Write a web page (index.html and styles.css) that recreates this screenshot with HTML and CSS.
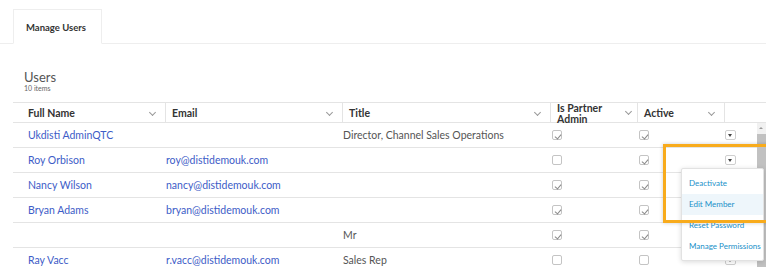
FILE: index.html
```html
<!DOCTYPE html>
<html lang="en">
<head>
  <meta charset="UTF-8">
  <title>Manage Users</title>
  <link rel="stylesheet" href="styles.css">
</head>
<body>
  <div class="tabs">
    <div class="tab">Manage Users</div>
  </div>

  <div class="list-head">
    <div class="list-title">Users</div>
    <div class="list-count">10 items</div>
  </div>

  <div class="grid">
    <div class="grid-header">
      <div class="hcell c-name"><span>Full Name</span><i class="chev"></i></div>
      <div class="hcell c-email"><span>Email</span><i class="chev"></i></div>
      <div class="hcell c-title"><span>Title</span><i class="chev"></i></div>
      <div class="hcell c-partner"><span>Is Partner Admin</span><i class="chev"></i></div>
      <div class="hcell c-active"><span>Active</span><i class="chev"></i></div>
      <div class="hcell c-action"></div>
    </div>

    <div class="grid-body">
      <div class="rows">
        <div class="row">
          <div class="cell c-name link">Ukdisti AdminQTC</div>
          <div class="cell c-email link"></div>
          <div class="cell c-title">Director, Channel Sales Operations</div>
          <div class="cell c-partner"><span class="box checked"></span></div>
          <div class="cell c-active"><span class="box checked"></span></div>
          <div class="cell c-action"><span class="drop"></span></div>
        </div>
        <div class="row">
          <div class="cell c-name link">Roy Orbison</div>
          <div class="cell c-email link">roy@distidemouk.com</div>
          <div class="cell c-title"></div>
          <div class="cell c-partner"><span class="box"></span></div>
          <div class="cell c-active"><span class="box checked"></span></div>
          <div class="cell c-action"><span class="drop"></span></div>
        </div>
        <div class="row">
          <div class="cell c-name link">Nancy Wilson</div>
          <div class="cell c-email link">nancy@distidemouk.com</div>
          <div class="cell c-title"></div>
          <div class="cell c-partner"><span class="box checked"></span></div>
          <div class="cell c-active"><span class="box checked"></span></div>
          <div class="cell c-action"></div>
        </div>
        <div class="row">
          <div class="cell c-name link">Bryan Adams</div>
          <div class="cell c-email link">bryan@distidemouk.com</div>
          <div class="cell c-title"></div>
          <div class="cell c-partner"><span class="box checked"></span></div>
          <div class="cell c-active"><span class="box checked"></span></div>
          <div class="cell c-action"></div>
        </div>
        <div class="row">
          <div class="cell c-name link"></div>
          <div class="cell c-email link"></div>
          <div class="cell c-title">Mr</div>
          <div class="cell c-partner"><span class="box checked"></span></div>
          <div class="cell c-active"><span class="box checked"></span></div>
          <div class="cell c-action"></div>
        </div>
        <div class="row">
          <div class="cell c-name link">Ray Vacc</div>
          <div class="cell c-email link">r.vacc@distidemouk.com</div>
          <div class="cell c-title">Sales Rep</div>
          <div class="cell c-partner"><span class="box"></span></div>
          <div class="cell c-active"><span class="box"></span></div>
          <div class="cell c-action"><span class="drop"></span></div>
        </div>
      </div>
      <div class="scrollbar">
        <div class="scroll-up"></div>
        <div class="scroll-thumb"></div>
      </div>
    </div>

    <!-- row action menu -->
    <ul class="menu">
      <li>Deactivate</li>
      <li class="hover">Edit Member</li>
      <li>Reset Password</li>
      <li>Manage Permissions</li>
    </ul>
    <div class="highlight"></div>
  </div>
</body>
</html>
```

FILE: styles.css
```css
* {
  margin: 0;
  padding: 0;
  box-sizing: border-box;
}

body {
  font-family: Lato, "Noto Sans", sans-serif;
  background: #fff;
  color: #555;
  width: 766px;
  height: 267px;
  overflow: hidden;
}

/* tabs */
.tabs {
  margin-top: 9px;
  padding-left: 13px;
  border-bottom: 1px solid #eeeeee;
  height: 35px;
}

.tab {
  width: 89px;
  height: 35px;
  border: 1px solid #eeeeee;
  border-bottom: 1px solid #fff;
  background: #fff;
  font-size: 9.5px;
  font-weight: 700;
  color: #333;
  padding: 12px 0 0 12px;
}

/* list heading */
.list-head {
  padding: 26px 0 0 24px;
  height: 58px;
}

.list-title {
  font-size: 13px;
  line-height: 14px;
  color: #555;
}

.list-count {
  font-size: 7px;
  line-height: 9px;
  color: #666;
}

/* grid */
.grid {
  position: relative;
  padding-left: 13px;
}

.grid-header {
  display: flex;
  height: 21px;
  border-top: 1px solid #e4e4e4;
  border-bottom: 1px solid #e4e4e4;
  margin-right: -13px;
}

.c-name { width: 152px; padding-left: 15px; }
.c-email { width: 177px; }
.c-title { width: 208px; }
.c-partner { width: 87px; }
.c-active { width: 87px; }
.c-action { width: 33px; }

.hcell {
  position: relative;
  display: flex;
  justify-content: space-between;
  padding-top: 4px;
  padding-right: 10px;
  font-size: 10.5px;
  line-height: 12px;
  font-weight: 700;
  color: #333;
}

.hcell + .hcell {
  border-left: 1px solid #e4e4e4;
  padding-left: 6px;
}

.hcell.c-partner {
  padding-top: 0;
  padding-right: 6px;
  line-height: 10.5px;
}

.hcell.c-partner span {
  width: 60px;
}

.hcell.c-action { flex: 1; }

.chev {
  width: 5px;
  height: 5px;
  margin-top: 3px;
  border-right: 1px solid #999;
  border-bottom: 1px solid #999;
  transform: rotate(45deg);
  flex-shrink: 0;
}

.hcell.c-partner .chev { margin-top: 6px; }

.grid-body {
  display: flex;
  margin-right: -13px;
}

.rows { width: 744px; }

.row {
  display: flex;
  height: 25px;
  align-items: center;
  border-bottom: 1px solid #e4e4e4;
  font-size: 10.5px;
}

.cell { padding-left: 1px; white-space: nowrap; }
.cell.c-name { padding-left: 15px; }
.cell.c-partner,
.cell.c-active { padding-left: 2px; }
.cell.c-action { padding-left: 1px; }

.link { color: #3d5cc7; }

.box {
  display: block;
  width: 10px;
  height: 10px;
  border: 1px solid #c4c4c4;
  border-radius: 2px;
  position: relative;
}

.box.checked::after {
  content: '';
  position: absolute;
  left: 2.5px;
  top: 1.5px;
  width: 3px;
  height: 5px;
  border-right: 1px solid #888;
  border-bottom: 1px solid #888;
  transform: rotate(40deg);
}

.drop {
  display: block;
  width: 11px;
  height: 10px;
  border: 1px solid #cfcfcf;
  border-radius: 2px;
  position: relative;
}

.drop::after {
  content: '';
  position: absolute;
  left: 2px;
  top: 3px;
  border-left: 2.5px solid transparent;
  border-right: 2.5px solid transparent;
  border-top: 3px solid #444;
}

.scrollbar {
  width: 9px;
  background: #f1f1f1;
}

.scroll-up {
  height: 11px;
  position: relative;
}

.scroll-up::after {
  content: '';
  position: absolute;
  left: 2px;
  top: 4px;
  border-left: 2px solid transparent;
  border-right: 2px solid transparent;
  border-bottom: 2px solid #999;
}

.scroll-thumb {
  height: 140px;
  background: #c1c1c1;
}

/* action menu */
.menu {
  list-style: none;
  position: absolute;
  left: 681px;
  top: 66px;
  width: 83px;
  padding: 4px 0 3px;
  background: #fff;
  border: 1px solid #e2e2e2;
  border-radius: 2px;
  box-shadow: 0 1px 5px rgba(0, 0, 0, 0.15);
}

.menu li {
  height: 21px;
  line-height: 21px;
  padding-left: 7px;
  font-size: 8px;
  color: #2190c9;
  white-space: nowrap;
}

.menu li.hover { background: #eef6fb; }

.highlight {
  position: absolute;
  left: 663px;
  top: 42px;
  width: 110px;
  height: 79px;
  border: 3px solid #f8ab1c;
  box-shadow: 0 0 4px rgba(0, 0, 0, 0.2);
}
```
